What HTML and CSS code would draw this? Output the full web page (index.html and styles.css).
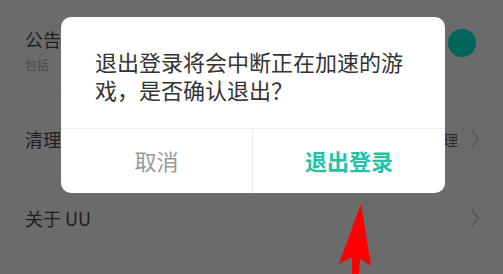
FILE: index.html
```html
<!DOCTYPE html>
<html lang="zh-CN">
<head>
<meta charset="utf-8">
<link rel="stylesheet" href="styles.css">
</head>
<body>
<div class="screen">
  <div class="list">
    <div class="row row-notice">
      <div class="row-text">
        <div class="title">公告</div>
        <div class="sub">包括</div>
      </div>
      <span class="toggle"></span>
    </div>
    <div class="row row-clean">
      <div class="title">清理</div>
      <div class="right"><span class="value">理</span>
        <svg class="chev" width="10" height="20" viewBox="0 0 10 20"><polyline points="1.5,1.5 8.5,10 1.5,18.5" fill="none" stroke="#575757" stroke-width="1.6"/></svg>
      </div>
    </div>
    <div class="row row-about">
      <div class="title">关于 UU</div>
      <div class="right">
        <svg class="chev" width="10" height="20" viewBox="0 0 10 20"><polyline points="1.5,1.5 8.5,10 1.5,18.5" fill="none" stroke="#575757" stroke-width="1.6"/></svg>
      </div>
    </div>
  </div>

  <div class="dialog">
    <div class="message">退出登录将会中断正在加速的游戏，是否确认退出？</div>
    <div class="actions">
      <div class="btn cancel">取消</div>
      <div class="btn confirm">退出登录</div>
    </div>
  </div>

  <svg class="arrow" width="60" height="84" viewBox="0 0 60 84">
    <polygon points="41,14 51,76 40,69 39,84 32,84 32,67 19,74" fill="#ff0000"/>
  </svg>
</div>
</body>
</html>
```
FILE: styles.css
```css
* { box-sizing: border-box; }
html, body { margin: 0; padding: 0; }
body {
  width: 503px;
  height: 274px;
  overflow: hidden;
  font-family: "Noto Sans CJK SC", "Noto Sans", sans-serif;
  background: #6b6b6b;
}
.screen {
  position: relative;
  width: 503px;
  height: 274px;
  background: #6b6b6b;
}
.list {
  display: flex;
  flex-direction: column;
}
.row {
  display: flex;
  align-items: center;
  justify-content: space-between;
  padding: 0 23px 0 25px;
  border-bottom: 1px solid #656565;
}
.row-notice { height: 95px; padding-top: 6px; }
.row-clean { height: 83px; padding-top: 6px; }
.row-about { height: 80px; padding-top: 0; }
.title {
  font-size: 18px;
  line-height: 24px;
  color: #1e1e1e;
  white-space: nowrap;
}
.sub {
  font-size: 12px;
  line-height: 16px;
  margin-top: 6px;
  color: #4a4a4a;
  white-space: nowrap;
}
.toggle {
  width: 28px;
  height: 28px;
  border-radius: 50%;
  background: #00665c;
  margin-top: -14px;
  margin-right: 4px;
}
.right {
  display: flex;
  align-items: center;
  gap: 12px;
}
.value {
  font-size: 15px;
  color: #2a2a2a;
}
.chev {
  display: block;
}
.dialog {
  position: absolute;
  left: 61px;
  top: 17px;
  width: 384px;
  height: 176px;
  background: #fff;
  border-radius: 10px;
  display: flex;
  flex-direction: column;
  overflow: hidden;
}
.message {
  height: 112px;
  padding: 30px 40px 0 34px;
  font-size: 22px;
  line-height: 28px;
  color: #333;
  border-bottom: 1px solid #ececec;
}
.actions {
  flex: 1;
  display: flex;
}
.btn {
  flex: 1;
  display: flex;
  align-items: center;
  justify-content: center;
  font-size: 22px;
  padding-bottom: 2px;
}
.cancel {
  color: #9a9a9a;
  border-right: 1px solid #ececec;
  flex: 0 0 192px;
}
.confirm {
  color: #1fc4a9;
  font-weight: 600;
}
.arrow {
  position: absolute;
  left: 320px;
  top: 190px;
}
```
